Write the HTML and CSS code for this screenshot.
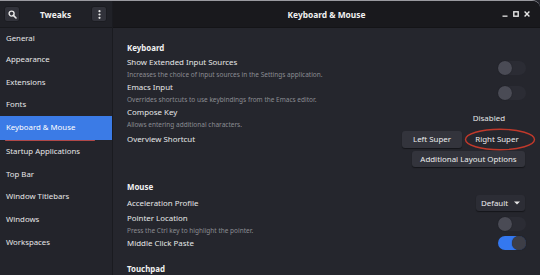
FILE: index.html
```html
<!DOCTYPE html>
<html>
<head>
<meta charset="utf-8">
<link rel="stylesheet" href="styles.css">
</head>
<body>
<div class="window">
  <div class="sidebar">
    <div class="side-head">
      <button class="hbtn search"><svg width="9" height="9" viewBox="0 0 9 9"><circle cx="3.6" cy="3.6" r="2.5" fill="none" stroke="#e6e6e6" stroke-width="1.4"/><path d="M5.4 5.4 L8 8" stroke="#e6e6e6" stroke-width="1.6" stroke-linecap="round"/></svg></button>
      <span class="app-title">Tweaks</span>
      <button class="hbtn menu"><svg width="3" height="9" viewBox="0 0 3 9"><circle cx="1.5" cy="1.2" r="1.1" fill="#e6e6e6"/><circle cx="1.5" cy="4.5" r="1.1" fill="#e6e6e6"/><circle cx="1.5" cy="7.8" r="1.1" fill="#e6e6e6"/></svg></button>
    </div>
    <ul class="nav">
      <li>General</li>
      <li>Appearance</li>
      <li>Extensions</li>
      <li>Fonts</li>
      <li class="active">Keyboard &amp; Mouse</li>
      <li>Startup Applications</li>
      <li>Top Bar</li>
      <li>Window Titlebars</li>
      <li>Windows</li>
      <li>Workspaces</li>
    </ul>
  </div>
  <div class="main">
    <div class="main-head">
      <span class="page-title">Keyboard &amp; Mouse</span>
      <div class="wctl">
        <svg width="6" height="6" viewBox="0 0 6 6"><rect x="0.5" y="4.5" width="5" height="1.3" fill="#e6e6e6"/></svg>
        <svg width="6" height="6" viewBox="0 0 6 6"><rect x="0.8" y="0.8" width="4.4" height="4.4" fill="none" stroke="#e6e6e6" stroke-width="1.4"/></svg>
        <svg width="6" height="6" viewBox="0 0 6 6"><path d="M0.6 0.6 L5.4 5.4 M5.4 0.6 L0.6 5.4" stroke="#e6e6e6" stroke-width="1.4"/></svg>
      </div>
    </div>
    <div class="content">
      <div class="section">Keyboard</div>
      <div class="row">
        <div class="txt"><div class="title">Show Extended Input Sources</div><div class="desc">Increases the choice of input sources in the Settings application.</div></div>
        <span class="toggle"></span>
      </div>
      <div class="row">
        <div class="txt"><div class="title">Emacs Input</div><div class="desc">Overrides shortcuts to use keybindings from the Emacs editor.</div></div>
        <span class="toggle"></span>
      </div>
      <div class="row">
        <div class="txt"><div class="title">Compose Key</div><div class="desc">Allows entering additional characters.</div></div>
        <span class="value">Disabled</span>
      </div>
      <div class="row shortcut">
        <div class="title">Overview Shortcut</div>
        <div class="btns">
          <button class="btn left">Left Super</button>
          <button class="btn right">Right Super</button>
        </div>
      </div>
      <div class="row layout">
        <button class="btn wide">Additional Layout Options</button>
      </div>
      <div class="section mouse">Mouse</div>
      <div class="row accel">
        <div class="title">Acceleration Profile</div>
        <button class="dropdown">Default <svg width="6" height="4" viewBox="0 0 6 4"><path d="M0 0.5 H6 L3 3.5 Z" fill="#e6e6e6"/></svg></button>
      </div>
      <div class="row">
        <div class="txt"><div class="title">Pointer Location</div><div class="desc">Press the Ctrl key to highlight the pointer.</div></div>
        <span class="toggle"></span>
      </div>
      <div class="row">
        <div class="txt"><div class="title">Middle Click Paste</div></div>
        <span class="toggle on"></span>
      </div>
      <div class="section touch">Touchpad</div>
    </div>
  </div>
  <svg class="annot" width="74" height="25" viewBox="0 0 74 25"><ellipse cx="37" cy="12.5" rx="34.5" ry="10.3" fill="none" stroke="#c0392b" stroke-width="1.4"/></svg>
</div>
</body>
</html>
```

FILE: styles.css
```css
* { box-sizing: border-box; margin: 0; padding: 0; }
html, body { width: 540px; height: 275px; overflow: hidden; background: #25262d; }
body { font-family: "Noto Sans", "Open Sans", sans-serif; color: #e4e4e6; }
.window {
  position: relative;
  display: flex;
  width: 540px;
  height: 275px;
  border-top: 1px solid #9a9aa0;
  border-top-right-radius: 8px;
  overflow: hidden;
}
.sidebar { width: 113px; flex: none; background: #23242b; border-right: 1px solid #1a1b20; display: flex; flex-direction: column; }
.side-head {
  height: 27px; flex: none; display: flex; align-items: center; justify-content: space-between;
  padding: 0 5px 0 4px; background: #202127; border-bottom: 1px solid #18191d;
}
.app-title { font-weight: bold; font-size: 8.4px; color: #f0f0f0; }
.hbtn {
  width: 16px; height: 16px; display: flex; align-items: center; justify-content: center;
  background: #31323a; border: 1px solid #1b1c21; border-radius: 3px;
}
.nav { list-style: none; padding-top: 0; }
.nav li { height: 22.7px; line-height: 22.7px; padding-left: 6px; font-size: 7.8px; color: #e6e6e8; }
.nav li:first-child { height: 20px; line-height: 20px; }
.nav li.active { position: relative; background: #3b7be6; color: #ffffff; height: 24px; line-height: 23px; }
.nav li.active::after {
  content: ""; position: absolute; left: 5px; width: 90px; bottom: -1px; height: 1.5px;
  background: #b04848; border-radius: 1px;
}
.main { flex: 1; display: flex; flex-direction: column; background: #25262d; }
.main-head {
  height: 27px; flex: none; position: relative; display: flex; align-items: center; justify-content: center;
  background: #19191d; border-bottom: 1px solid #141417;
}
.page-title { font-weight: bold; font-size: 8.4px; color: #f0f0f0; }
.wctl { position: absolute; right: 10px; top: 10px; display: flex; gap: 5px; }
.content { padding: 13px 13px 0 14px; display: flex; flex-direction: column; }
.section { font-weight: bold; font-size: 7.9px; line-height: 14px; color: #f2f2f2; }
.section.mouse { margin-top: 13px; }
.section.touch { margin-top: 12px; }
.row { display: flex; align-items: center; justify-content: space-between; }
.title { font-size: 7.9px; line-height: 14px; color: #e6e6e8; }
.desc { font-size: 6.5px; line-height: 11px; color: #8b8c92; }
.toggle {
  position: relative; width: 28px; height: 14px; border-radius: 7px; background: #2b2c34; margin-right: 1px;
}
.toggle::before {
  content: ""; position: absolute; left: 0; top: 0; width: 14px; height: 14px; border-radius: 50%;
  background: #4a4b55; box-shadow: 0 0 1px #15161a;
}
.toggle.on { background: #3478f0; }
.toggle.on::before { left: 14px; background: #3d3e47; }
.value { font-size: 7.9px; color: #e6e6e8; margin-right: 22px; }
.row.shortcut { height: 18px; }
.btns { display: flex; gap: 5px; }
.btn {
  font-family: inherit; font-size: 7.9px; color: #ececee; background: #33343c; border: none;
  border-radius: 3px; height: 17px; padding: 0; box-shadow: 0 1px 1px #15161a;
}
.btn.left { width: 60px; }
.btn.right { width: 60px; background: #25262d; box-shadow: none; }
.row.layout { justify-content: flex-end; margin-top: 3px; padding-right: 2px; }
.btn.wide { width: 113px; height: 16px; }
.row.accel { height: 16px; margin-top: 1px; }
.dropdown {
  font-family: inherit; font-size: 7.9px; color: #ececee; background: #2c2d35; border: none;
  border-radius: 3px; width: 49px; height: 16px; display: flex; align-items: center; justify-content: space-between;
  padding: 0 5px; margin-right: 2px; box-shadow: 0 1px 1px #15161a;
}
.annot { position: absolute; left: 463px; top: 126px; }
```
